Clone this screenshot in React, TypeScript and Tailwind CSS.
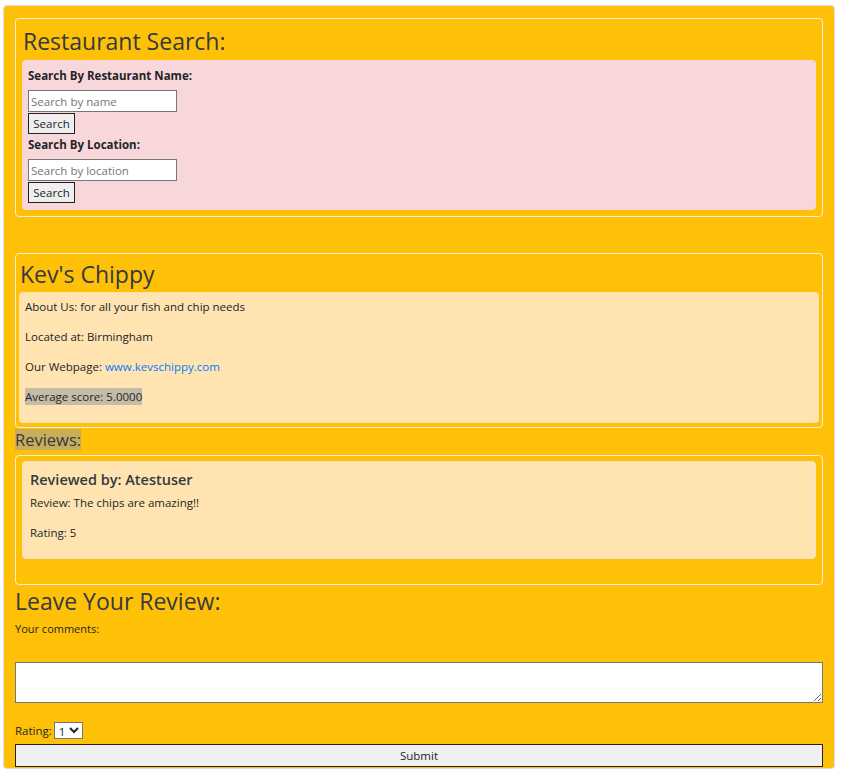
export default function App() {
    return (
        <div className="min-h-[775px] bg-white pt-[5px] pl-[3px] pr-[6px] text-[#212529]" style={{ fontFamily: '"Open Sans", "Noto Sans", sans-serif' }}>
            <div className="h-[764px] rounded border border-[#dddddd] bg-[#ffc107] pl-[11px] pr-[11px] pt-[12px]">
                {/* search */}
                <div className="rounded-sm border border-[#f4eee0] px-[6px] pb-[6px]">
                    <h2 className="h-[41px] pl-[1px] text-[23px] font-medium leading-[44px] text-[#343a40]">Restaurant Search:</h2>
                    <div className="rounded bg-[#f8d7da] px-[6px] pt-[6px] pb-[7px]">
                        <p className="mt-[1px] text-[11.5px] font-bold leading-[18px]">Search By Restaurant Name:</p>
                        <input className="mt-[5px] block h-[22px] w-[149px] border border-[#767676] bg-white px-[2px] text-[11.5px] placeholder:text-[#757575]" placeholder="Search by name" />
                        <button className="mt-[1px] block h-[21px] w-[47px] border border-[#222] bg-[#efefef] text-[11.5px]">Search</button>
                        <p className="mt-[2px] text-[11.5px] font-bold leading-[18px]">Search By Location:</p>
                        <input className="mt-[5px] block h-[22px] w-[149px] border border-[#767676] bg-white px-[2px] text-[11.5px] placeholder:text-[#757575]" placeholder="Search by location" />
                        <button className="mt-[1px] block h-[21px] w-[47px] border border-[#222] bg-[#efefef] text-[11.5px]">Search</button>
                    </div>
                </div>

                {/* restaurant */}
                <div className="mt-[36px] rounded-sm border border-[#f4eee0] px-[3px] pb-[4px]">
                    <h2 className="h-[38px] pl-[1px] text-[23px] font-medium leading-[40px] text-[#343a40]">Kev's Chippy</h2>
                    <div className="rounded bg-[#ffe4b1] px-[6px] pt-[6px] pb-[17px] text-[11.5px] leading-[18px]">
                        <p>About Us: for all your fish and chip needs</p>
                        <p className="mt-[12px]">Located at: Birmingham</p>
                        <p className="mt-[12px]">Our Webpage: <a className="text-[#007bff]" href="#">www.kevschippy.com</a></p>
                        <p className="mt-[12px]"><span className="inline-block bg-[#c6bba7] leading-[17px]">Average score: 5.0000</span></p>
                    </div>
                </div>

                <h3 className="-mt-[1px] inline-block bg-[#c8ad5b] text-[16.5px] font-medium leading-[21px] text-[#343a40]">Reviews:</h3>

                <div className="mt-[3px] h-[130px] rounded-sm border border-[#f4eee0] px-[6px] pt-[5px]">
                    <div className="h-[98px] rounded border border-[#f0e4cc] bg-[#ffe4b1] px-[7px] pt-[8px] text-[11.5px] leading-[18px]">
                        <p className="text-[14.5px] font-semibold leading-[20px] text-[#343a40]">Reviewed by: Atestuser</p>
                        <p className="mt-[4px]">Review: The chips are amazing!!</p>
                        <p className="mt-[12px]">Rating: 5</p>
                    </div>
                </div>

                <h2 className="h-[36px] text-[23px] font-medium leading-[32px] text-[#343a40]">Leave Your Review:</h2>
                <p className="text-[11px] leading-[16px]">Your comments:</p>
                <textarea className="mt-[25px] block h-[41px] w-full border border-[#767676] bg-white" />
                <div className="mt-[19px] flex items-center text-[11.5px] leading-[16px]">
                    <span>Rating:</span>
                    <select className="ml-[2px] h-[17px] w-[29px] border border-[#767676] bg-white text-[11.5px] leading-[14px]">
                        <option>1</option>
                        <option>2</option>
                        <option>3</option>
                        <option>4</option>
                        <option>5</option>
                    </select>
                </div>
                <button className="mt-[5px] block h-[23px] w-full border border-[#222] bg-[#efefef] text-[11.5px]">Submit</button>
            </div>
        </div>
    );
}
